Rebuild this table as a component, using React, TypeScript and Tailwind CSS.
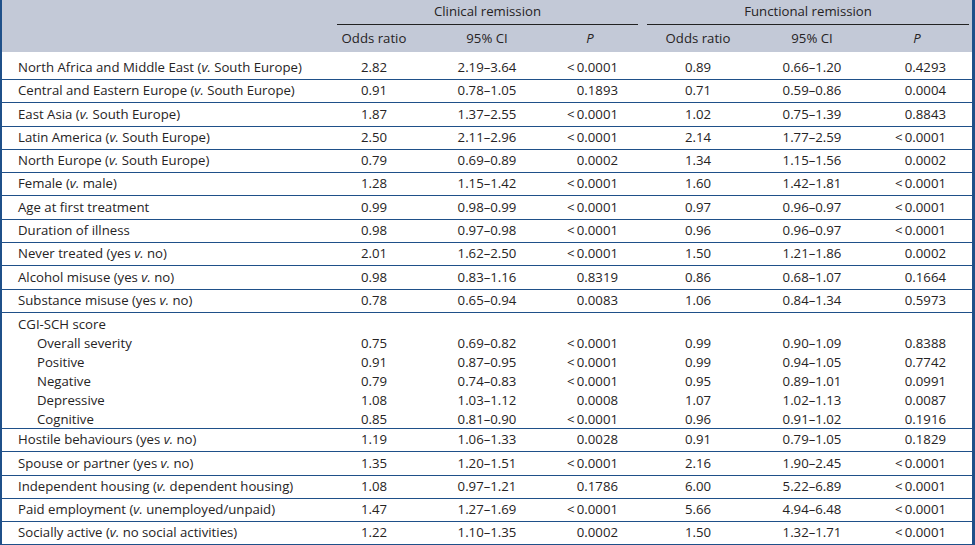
const grid = 'grid grid-cols-[334px_76px_150px_78px_116px_112px_104px]';

type Row = { label: string; v: string[] };

const top: Row[] = [
  { label: 'North Africa and Middle East (v. South Europe)', v: ['2.82', '2.19–3.64', '<\u20090.0001', '0.89', '0.66–1.20', '0.4293'] },
  { label: 'Central and Eastern Europe (v. South Europe)', v: ['0.91', '0.78–1.05', '0.1893', '0.71', '0.59–0.86', '0.0004'] },
  { label: 'East Asia (v. South Europe)', v: ['1.87', '1.37–2.55', '<\u20090.0001', '1.02', '0.75–1.39', '0.8843'] },
  { label: 'Latin America (v. South Europe)', v: ['2.50', '2.11–2.96', '<\u20090.0001', '2.14', '1.77–2.59', '<\u20090.0001'] },
  { label: 'North Europe (v. South Europe)', v: ['0.79', '0.69–0.89', '0.0002', '1.34', '1.15–1.56', '0.0002'] },
  { label: 'Female (v. male)', v: ['1.28', '1.15–1.42', '<\u20090.0001', '1.60', '1.42–1.81', '<\u20090.0001'] },
  { label: 'Age at first treatment', v: ['0.99', '0.98–0.99', '<\u20090.0001', '0.97', '0.96–0.97', '<\u20090.0001'] },
  { label: 'Duration of illness', v: ['0.98', '0.97–0.98', '<\u20090.0001', '0.96', '0.96–0.97', '<\u20090.0001'] },
  { label: 'Never treated (yes v. no)', v: ['2.01', '1.62–2.50', '<\u20090.0001', '1.50', '1.21–1.86', '0.0002'] },
  { label: 'Alcohol misuse (yes v. no)', v: ['0.98', '0.83–1.16', '0.8319', '0.86', '0.68–1.07', '0.1664'] },
  { label: 'Substance misuse (yes v. no)', v: ['0.78', '0.65–0.94', '0.0083', '1.06', '0.84–1.34', '0.5973'] },
];

// CGI-SCH sub-scores
const cgi: Row[] = [
  { label: 'Overall severity', v: ['0.75', '0.69–0.82', '<\u20090.0001', '0.99', '0.90–1.09', '0.8388'] },
  { label: 'Positive', v: ['0.91', '0.87–0.95', '<\u20090.0001', '0.99', '0.94–1.05', '0.7742'] },
  { label: 'Negative', v: ['0.79', '0.74–0.83', '<\u20090.0001', '0.95', '0.89–1.01', '0.0991'] },
  { label: 'Depressive', v: ['1.08', '1.03–1.12', '0.0008', '1.07', '1.02–1.13', '0.0087'] },
  { label: 'Cognitive', v: ['0.85', '0.81–0.90', '<\u20090.0001', '0.96', '0.91–1.02', '0.1916'] },
];

const bottom: Row[] = [
  { label: 'Hostile behaviours (yes v. no)', v: ['1.19', '1.06–1.33', '0.0028', '0.91', '0.79–1.05', '0.1829'] },
  { label: 'Spouse or partner (yes v. no)', v: ['1.35', '1.20–1.51', '<\u20090.0001', '2.16', '1.90–2.45', '<\u20090.0001'] },
  { label: 'Independent housing (v. dependent housing)', v: ['1.08', '0.97–1.21', '0.1786', '6.00', '5.22–6.89', '<\u20090.0001'] },
  { label: 'Paid employment (v. unemployed/unpaid)', v: ['1.47', '1.27–1.69', '<\u20090.0001', '5.66', '4.94–6.48', '<\u20090.0001'] },
  { label: 'Socially active (v. no social activities)', v: ['1.22', '1.10–1.35', '0.0002', '1.50', '1.32–1.71', '<\u20090.0001'] },
];

function Label({ text }: { text: string }) {
  const parts = text.split('v.');
  if (parts.length < 2) return <>{text}</>;
  return (
    <>
      {parts[0]}
      <i>v.</i>
      {parts[1]}
    </>
  );
}

function Cells({ v }: { v: string[] }) {
  return (
    <>
      <div className="text-center">{v[0]}</div>
      <div className="text-center">{v[1]}</div>
      <div className="text-right pr-[22px]">{v[2]}</div>
      <div className="text-center">{v[3]}</div>
      <div className="text-center">{v[4]}</div>
      <div className="text-right pr-[26px]">{v[5]}</div>
    </>
  );
}

function DataRow({ row, first }: { row: Row; first?: boolean }) {
  return (
    <div className={`${grid} items-center border-b border-[#1f5089] ${first ? 'h-[28px] pt-[5px]' : 'h-[23.3px]'}`}>
      <div className="pl-4 whitespace-nowrap">
        <Label text={row.label} />
      </div>
      <Cells v={row.v} />
    </div>
  );
}

export default function App() {
  return (
    <div
      className="w-[975px] h-[545px] overflow-hidden bg-white border-l-2 border-r-[3px] border-[#1f5089] text-[13.2px] text-[#262324]"
      style={{ fontFamily: '"Open Sans", "DejaVu Sans", sans-serif' }}
    >
      <div className="bg-[#c3c9d7] h-[52px]">
        <div className={`${grid} h-[25px]`}>
          <div />
          <div className="col-span-3 ml-[1px] mr-[2px] border-b border-[#222] flex items-center justify-center">
            Clinical remission
          </div>
          <div className="col-span-3 ml-[7px] mr-[3px] border-b border-[#222] flex items-center justify-center">
            Functional remission
          </div>
        </div>
        <div className={`${grid} h-[27px] items-center`}>
          <div />
          <div className="text-center">Odds ratio</div>
          <div className="text-center">95% CI</div>
          <div className="text-center pr-[22px] italic">P</div>
          <div className="text-center">Odds ratio</div>
          <div className="text-center">95% CI</div>
          <div className="text-center pr-[6px] italic">P</div>
        </div>
      </div>

      {top.map((r, i) => (
        <DataRow key={r.label} row={r} first={i === 0} />
      ))}

      <div className="border-b border-[#1f5089] h-[116px] pt-[2px] leading-[19px]">
        <div className={grid}>
          <div className="pl-4">CGI-SCH score</div>
        </div>
        {cgi.map((r) => (
          <div key={r.label} className={grid}>
            <div className="pl-[35px]">{r.label}</div>
            <Cells v={r.v} />
          </div>
        ))}
      </div>

      {bottom.map((r) => (
        <DataRow key={r.label} row={r} />
      ))}
    </div>
  );
}
